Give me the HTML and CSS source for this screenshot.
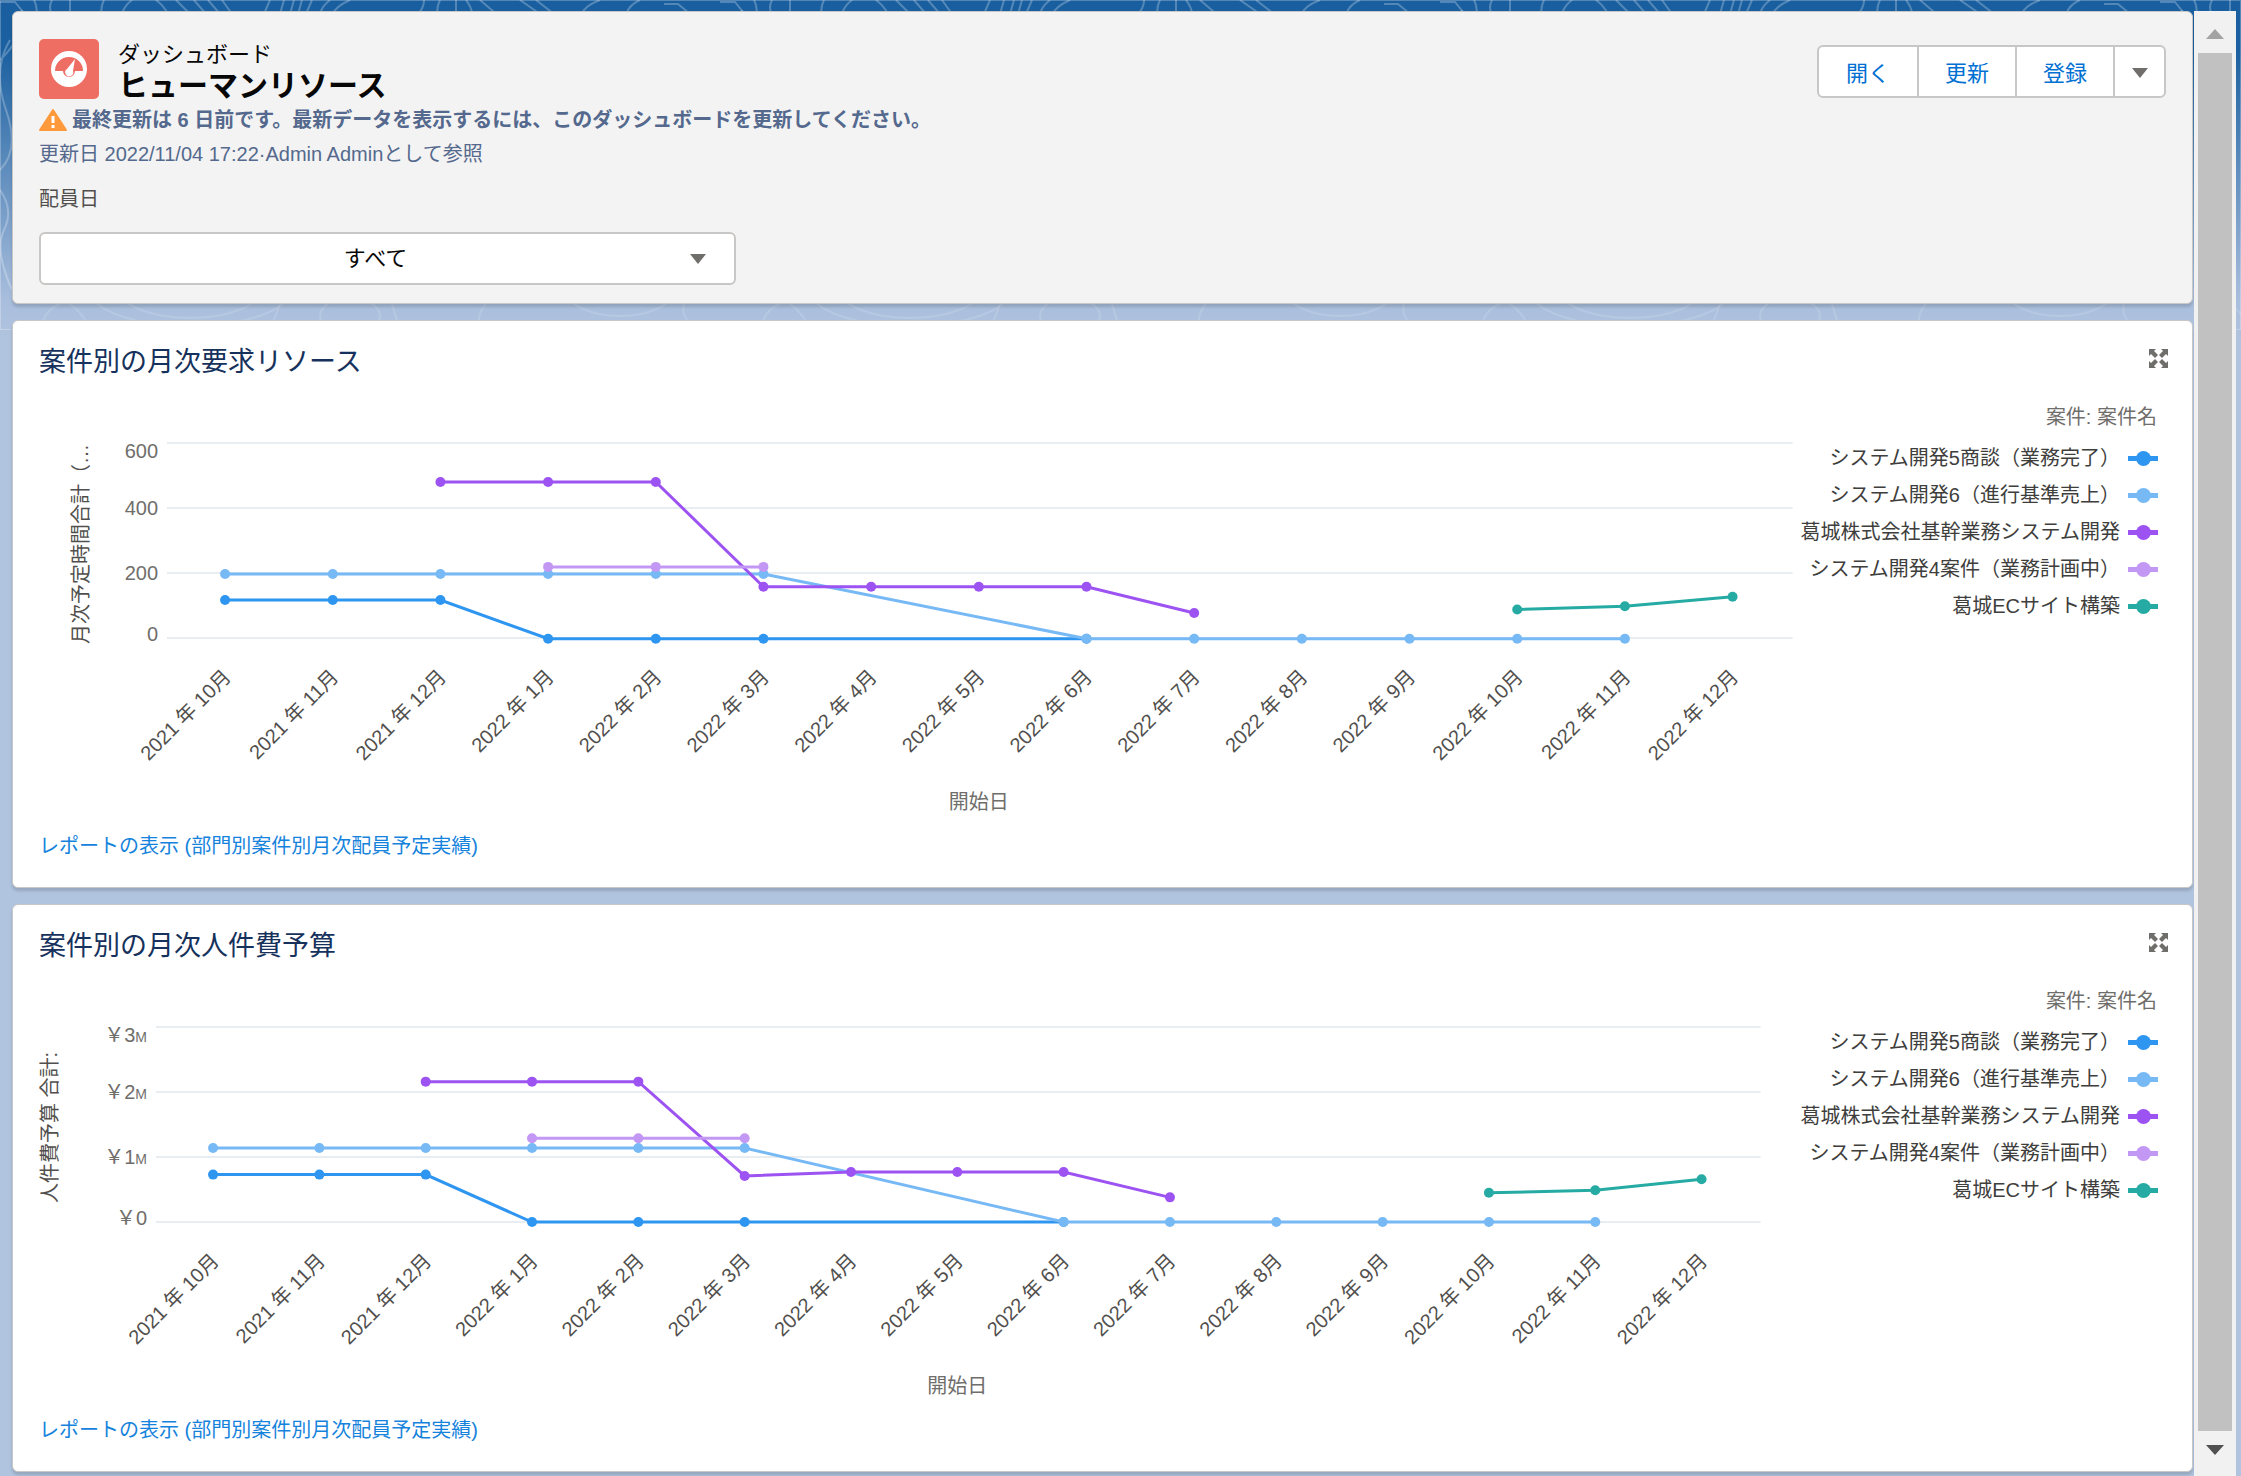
FILE: index.html
```html
<!DOCTYPE html>
<html lang="ja">
<head>
  <meta charset="UTF-8">
  <title>ヒューマンリソース</title>
  <link rel="stylesheet" href="styles.css">
</head>
<body>
  <!-- Contour lines behind the cards -->
  <svg class="contours" aria-hidden="true">
    <defs>
      <pattern id="contour" width="720" height="330" patternUnits="userSpaceOnUse">
        <path d="M-10 2h25l8 10M34 0q4 8 2 14M52 0q-4 8 0 14M70 0v14M104 0q-4 8-2 14M132 0q-8 6-10 14M156 0q8 6 12 14M176 0l14 14M194 0l12 14M208 0l12 14M222 0l10 14M270 0l-6 14M284 0l-4 14M294 0l-4 14M302 0l-4 14M312 0l-6 14M330 0q-8 6-10 14M350 0q-12 5-18 14M424 0q0 8-6 14M440 0q-4 8-2 14M456 0v14M466 0q6 8 6 14M480 0l14 12M520 0l20 14M536 0l18 14M600 0q-16 6-18 14M640 0q-10 4-14 14M664 4h14l12 10"/>
        <path d="M0 60q24-22 22-50M10 40q-18 30-4 70t-6 60M0 190q14 20 4 40t8 60"/>
        <g opacity="0.5">
          <ellipse cx="190" cy="290" rx="70" ry="28"/>
          <ellipse cx="190" cy="290" rx="100" ry="36"/>
          <ellipse cx="350" cy="316" rx="30" ry="18"/>
          <ellipse cx="620" cy="290" rx="54" ry="26"/>
          <path d="M40 330q4-20 20-26M90 330q-6-16-20-26M270 330l10-26M400 330l-8-26M480 330q-4-16 6-26M700 330q-20-10-16-26"/>
        </g>
      </pattern>
    </defs>
    <rect width="100%" height="330" fill="url(#contour)"/>
  </svg>

  <div class="workspace">
    <main class="dashboard">
      <header class="card page-header">
        <div class="title-row">
          <svg class="object-icon" viewBox="0 0 60 60" aria-hidden="true">
            <rect width="60" height="60" rx="5" fill="#ef6e64"/>
            <circle cx="30" cy="30" r="18" fill="#fff"/>
            <path d="M16 32a14 14 0 1 1 28 0h-8a6 6 0 0 1-12 0z" fill="#ef6e64"/>
            <path d="M36 20l-2 12a4 4 0 1 1-6-2z" fill="#fff"/>
          </svg>
          <div class="title-text">
            <p class="object-name">ダッシュボード</p>
            <h1>ヒューマンリソース</h1>
          </div>
          <div class="button-group">
            <button type="button">開く</button>
            <button type="button">更新</button>
            <button type="button">登録</button>
            <button type="button" class="more" aria-label="その他">
              <svg viewBox="0 0 16 10" width="16" height="10"><path d="M0 0h16L8 10z" fill="#706e6b"/></svg>
            </button>
          </div>
        </div>
        <p class="warning">
          <svg viewBox="0 0 28 22" width="28" height="22" aria-hidden="true">
            <path d="M14 1L27 21H1z" fill="#ff9a3c" stroke="#ff9a3c" stroke-width="2" stroke-linejoin="round"/>
            <path d="M14 7v7M14 16v3" stroke="#fff" stroke-width="3"/>
          </svg>
          最終更新は 6 日前です。最新データを表示するには、このダッシュボードを更新してください。
        </p>
        <p class="meta">更新日 2022/11/04 17:22·Admin Adminとして参照</p>
        <label class="filter-label" for="assign-date">配員日</label>
        <div class="filter">
          <select id="assign-date">
            <option>すべて</option>
          </select>
          <svg class="caret" viewBox="0 0 16 10" width="16" height="10" aria-hidden="true"><path d="M0 0h16L8 10z" fill="#706e6b"/></svg>
        </div>
      </header>

      <section class="card widget">
        <div class="widget-head">
          <h2>案件別の月次要求リソース</h2>
          <button type="button" class="expand" aria-label="展開">
            <svg viewBox="0 0 19 19" width="19" height="19"><path d="M0 0h7L5 2l4 4-3 3-4-4-2 2zM19 0h-7l2 2-4 4 3 3 4-4 2 2zM0 19h7l-2-2 4-4-3-3-4 4-2-2zM19 19h-7l2-2-4-4 3-3 4 4 2-2z"/></svg>
          </button>
        </div>
        <div class="widget-body">
          <svg class="chart" id="hours-chart" viewBox="0 0 1761 420"></svg>
          <div class="legend">
            <h3>案件: 案件名</h3>
            <ul>
              <li>システム開発5商談（業務完了）<i class="marker blue"></i></li>
              <li>システム開発6（進行基準売上）<i class="marker sky"></i></li>
              <li>葛城株式会社基幹業務システム開発<i class="marker purple"></i></li>
              <li>システム開発4案件（業務計画中）<i class="marker lavender"></i></li>
              <li>葛城ECサイト構築<i class="marker teal"></i></li>
            </ul>
          </div>
        </div>
        <a class="report-link" href="#">レポートの表示 (部門別案件別月次配員予定実績)</a>
      </section>

      <section class="card widget">
        <div class="widget-head">
          <h2>案件別の月次人件費予算</h2>
          <button type="button" class="expand" aria-label="展開">
            <svg viewBox="0 0 19 19" width="19" height="19"><path d="M0 0h7L5 2l4 4-3 3-4-4-2 2zM19 0h-7l2 2-4 4 3 3 4-4 2 2zM0 19h7l-2-2 4-4-3-3-4 4-2-2zM19 19h-7l2-2-4-4 3-3 4 4 2-2z"/></svg>
          </button>
        </div>
        <div class="widget-body">
          <svg class="chart" id="cost-chart" viewBox="0 0 1761 420"></svg>
          <div class="legend">
            <h3>案件: 案件名</h3>
            <ul>
              <li>システム開発5商談（業務完了）<i class="marker blue"></i></li>
              <li>システム開発6（進行基準売上）<i class="marker sky"></i></li>
              <li>葛城株式会社基幹業務システム開発<i class="marker purple"></i></li>
              <li>システム開発4案件（業務計画中）<i class="marker lavender"></i></li>
              <li>葛城ECサイト構築<i class="marker teal"></i></li>
            </ul>
          </div>
        </div>
        <a class="report-link" href="#">レポートの表示 (部門別案件別月次配員予定実績)</a>
      </section>
    </main>

    <div class="scrollbar" aria-hidden="true">
      <svg viewBox="0 0 18 10" width="18" height="10"><path d="M0 10h18L9 0z" fill="#a3a3a3"/></svg>
      <div class="thumb"></div>
      <svg viewBox="0 0 18 10" width="18" height="10"><path d="M0 0h18L9 10z" fill="#505050"/></svg>
    </div>
  </div>

  <script src="charts.js"></script>
</body>
</html>
```
FILE: styles.css
```css
* {
  box-sizing: border-box;
  margin: 0;
  padding: 0;
}

body {
  min-height: 100vh;
  font-family: "Liberation Sans", "Noto Sans CJK JP", sans-serif;
  font-size: 20px;
  color: #080707;
  background: linear-gradient(#195f9f 0, #1b60a0 50px, #a9bedd 300px, #b0c4df 340px) #b0c4df no-repeat;
}

button,
select {
  font-family: inherit;
  font-size: 22px;
}

.contours {
  position: absolute;
  top: 0;
  left: 0;
  width: 100%;
  height: 330px;
  fill: none;
  stroke: rgba(255, 255, 255, 0.25);
  stroke-width: 2;
}

.workspace {
  position: relative;
  display: flex;
  gap: 1px;
  min-height: 100vh;
  padding: 11px 5px 0 12px;
}

.dashboard {
  flex: 1;
  min-width: 0;
  padding-bottom: 2px;
}

/* Cards */
.card {
  background: #fff;
  border: 1px solid #c9c7c5;
  border-radius: 6px;
  box-shadow: 0 3px 3px rgba(0, 0, 0, 0.15);
}

.card + .card {
  margin-top: 16px;
}

/* Page header */
.page-header {
  padding: 27px 26px 18px;
  background: #f3f3f3;
}

.title-row {
  display: flex;
  gap: 19px;
  height: 64px;
}

.object-icon {
  width: 60px;
  height: 60px;
}

.title-text {
  padding-top: 2px;
}

.object-name {
  font-size: 22px;
  line-height: 28px;
}

h1 {
  font-size: 30px;
  line-height: 34px;
}

.button-group {
  display: flex;
  height: 53px;
  margin: 6px 0 0 auto;
  border: 2px solid #c9c7c5;
  border-radius: 6px;
  background: #fff;
}

.button-group button {
  width: 98px;
  padding-bottom: 2px;
  border: none;
  background: none;
  color: #0070d2;
}

.button-group button + button {
  border-left: 2px solid #c9c7c5;
}

.button-group .more {
  width: 51px;
}

.warning,
.meta {
  line-height: 34px;
  color: #54698d;
}

.warning {
  display: flex;
  align-items: center;
  gap: 5px;
  font-weight: bold;
}

.filter-label {
  display: block;
  margin: 13px 0 18px;
  line-height: 30px;
  color: #514f4d;
}

.filter {
  position: relative;
  max-width: 697px;
}

.filter select {
  display: block;
  width: 100%;
  height: 53px;
  padding-right: 24px;
  border: 2px solid #c9c7c5;
  border-radius: 6px;
  background: #fff;
  color: #080707;
  text-align-last: center;
  appearance: none;
}

.caret {
  position: absolute;
  top: 22px;
  right: 30px;
}

/* Widgets */
.widget {
  padding: 21px 34px 26px 26px;
}

.widget-head {
  display: flex;
  justify-content: space-between;
  margin-right: -10px;
}

h2 {
  font-size: 27px;
  font-weight: normal;
  line-height: 40px;
  color: #16325c;
}

.expand {
  width: 19px;
  height: 32px;
  border: none;
  background: none;
  fill: #706e6b;
}

.expand svg {
  display: block;
}

.widget-body {
  display: flex;
  align-items: flex-start;
  margin: 18px 0 11px;
}

.report-link {
  display: block;
  line-height: 30px;
  color: #1583dc;
  text-decoration: none;
}

/* Chart */
.chart {
  flex: 1;
  min-width: 0;
  fill: #514f4d;
  font-size: 20px;
}

.chart .grid {
  stroke: #e8edf2;
  stroke-width: 2;
}

.chart .line {
  fill: none;
  stroke-width: 3;
}

.chart .muted {
  fill: #706e6b;
}

.chart .unit {
  font-size: 14px;
}

/* Legend */
.legend {
  padding-top: 2px;
  text-align: right;
}

.legend h3 {
  margin: 0 1px 8px 0;
  font-size: 20px;
  font-weight: normal;
  line-height: 30px;
  color: #706e6b;
}

.legend ul {
  list-style: none;
}

.legend li {
  display: flex;
  justify-content: flex-end;
  align-items: center;
  gap: 8px;
  line-height: 37px;
  white-space: nowrap;
  color: #3e3e3c;
}

.marker {
  display: flex;
  justify-content: center;
  align-items: center;
  width: 30px;
  height: 5px;
  background: currentColor;
}

.marker::before {
  content: "";
  width: 15px;
  height: 15px;
  flex: none;
  border-radius: 50%;
  background: currentColor;
}

.blue { color: #2e96f0; }
.sky { color: #76b9f5; }
.purple { color: #9d53f2; }
.lavender { color: #c398f5; }
.teal { color: #26aba4; }

/* Scrollbar */
.scrollbar {
  display: flex;
  flex-direction: column;
  align-items: center;
  gap: 14px;
  width: 42px;
  padding: 18px 0 21px;
  background: #f1f1f1;
}

.thumb {
  flex: 1;
  width: 34px;
  background: #c1c1c1;
}
```
FILE: charts.js
```js
const COLORS = {
  blue: '#2e96f0',
  sky: '#76b9f5',
  purple: '#9d53f2',
  lavender: '#c398f5',
  teal: '#26aba4'
};

const MONTHS = [
  '2021 年 10月', '2021 年 11月', '2021 年 12月',
  '2022 年 1月', '2022 年 2月', '2022 年 3月', '2022 年 4月',
  '2022 年 5月', '2022 年 6月', '2022 年 7月', '2022 年 8月',
  '2022 年 9月', '2022 年 10月', '2022 年 11月', '2022 年 12月'
];

// Each point is [month index, value]
const hours = {
  title: '月次予定時間合計（…', titleX: 49, titleY: 244,
  left: 128, right: 1753, first: 186, last: 1693,
  zero: 238, step: 65, unit: 200,
  ticks: ['0', '200', '400', '600'], suffix: '',
  series: {
    blue: [[0, 117], [1, 117], [2, 117], [3, -2], [4, -2], [5, -2], [8, -2]],
    sky: [[0, 197], [1, 197], [2, 197], [3, 197], [4, 197], [5, 197], [8, -2], [9, -2], [10, -2], [11, -2], [12, -2], [13, -2]],
    purple: [[2, 480], [3, 480], [4, 480], [5, 158], [6, 158], [7, 158], [8, 158], [9, 77]],
    lavender: [[3, 219], [4, 219], [5, 219]],
    teal: [[12, 88], [13, 98], [14, 127]]
  }
};

const cost = {
  title: '人件費予算 合計:', titleX: 18, titleY: 219,
  left: 117, right: 1721, first: 174, last: 1662,
  zero: 238, step: 65, unit: 1,
  ticks: ['￥0', '￥1', '￥2', '￥3'], suffix: 'M',
  series: {
    blue: [[0, 0.73], [1, 0.73], [2, 0.73], [3, 0], [4, 0], [5, 0], [8, 0]],
    sky: [[0, 1.14], [1, 1.14], [2, 1.14], [3, 1.14], [4, 1.14], [5, 1.14], [8, 0], [9, 0], [10, 0], [11, 0], [12, 0], [13, 0]],
    purple: [[2, 2.16], [3, 2.16], [4, 2.16], [5, 0.71], [6, 0.77], [7, 0.77], [8, 0.77], [9, 0.38]],
    lavender: [[3, 1.29], [4, 1.29], [5, 1.29]],
    teal: [[12, 0.45], [13, 0.49], [14, 0.66]]
  }
};

function drawChart(id, c) {
  const gap = (c.last - c.first) / (MONTHS.length - 1);
  const x = i => c.first + gap * i;
  const y = v => c.zero - v / c.unit * c.step;
  let out = '';

  // end labels are pulled inside the plot
  c.ticks.forEach((label, i) => {
    const ty = c.zero - i * c.step;
    const shift = i === 0 ? -4 : i === c.ticks.length - 1 ? 8 : 0;
    const unit = i > 0 && c.suffix ? `<tspan class="unit">${c.suffix}</tspan>` : '';
    out += `<line class="grid" x1="${c.left}" x2="${c.right}" y1="${ty}" y2="${ty}"/>`;
    out += `<text class="muted" x="${c.left - 9}" y="${ty + 7 + shift}" text-anchor="end">${label}${unit}</text>`;
  });

  for (const name in c.series) {
    const points = c.series[name];
    out += `<polyline class="line" stroke="${COLORS[name]}" points="${points.map(p => x(p[0]) + ',' + y(p[1])).join(' ')}"/>`;
    points.forEach(p => {
      out += `<circle cx="${x(p[0])}" cy="${y(p[1])}" r="5" fill="${COLORS[name]}"/>`;
    });
  }

  MONTHS.forEach((m, i) => {
    out += `<text text-anchor="end" transform="translate(${x(i) + 7} 278) rotate(-45)">${m}</text>`;
  });

  out += `<text transform="translate(${c.titleX} ${c.titleY}) rotate(-90)">${c.title}</text>`;
  out += `<text class="muted" x="${(c.first + c.last) / 2}" y="409" text-anchor="middle">開始日</text>`;
  document.getElementById(id).innerHTML = out;
}

drawChart('hours-chart', hours);
drawChart('cost-chart', cost);
```
